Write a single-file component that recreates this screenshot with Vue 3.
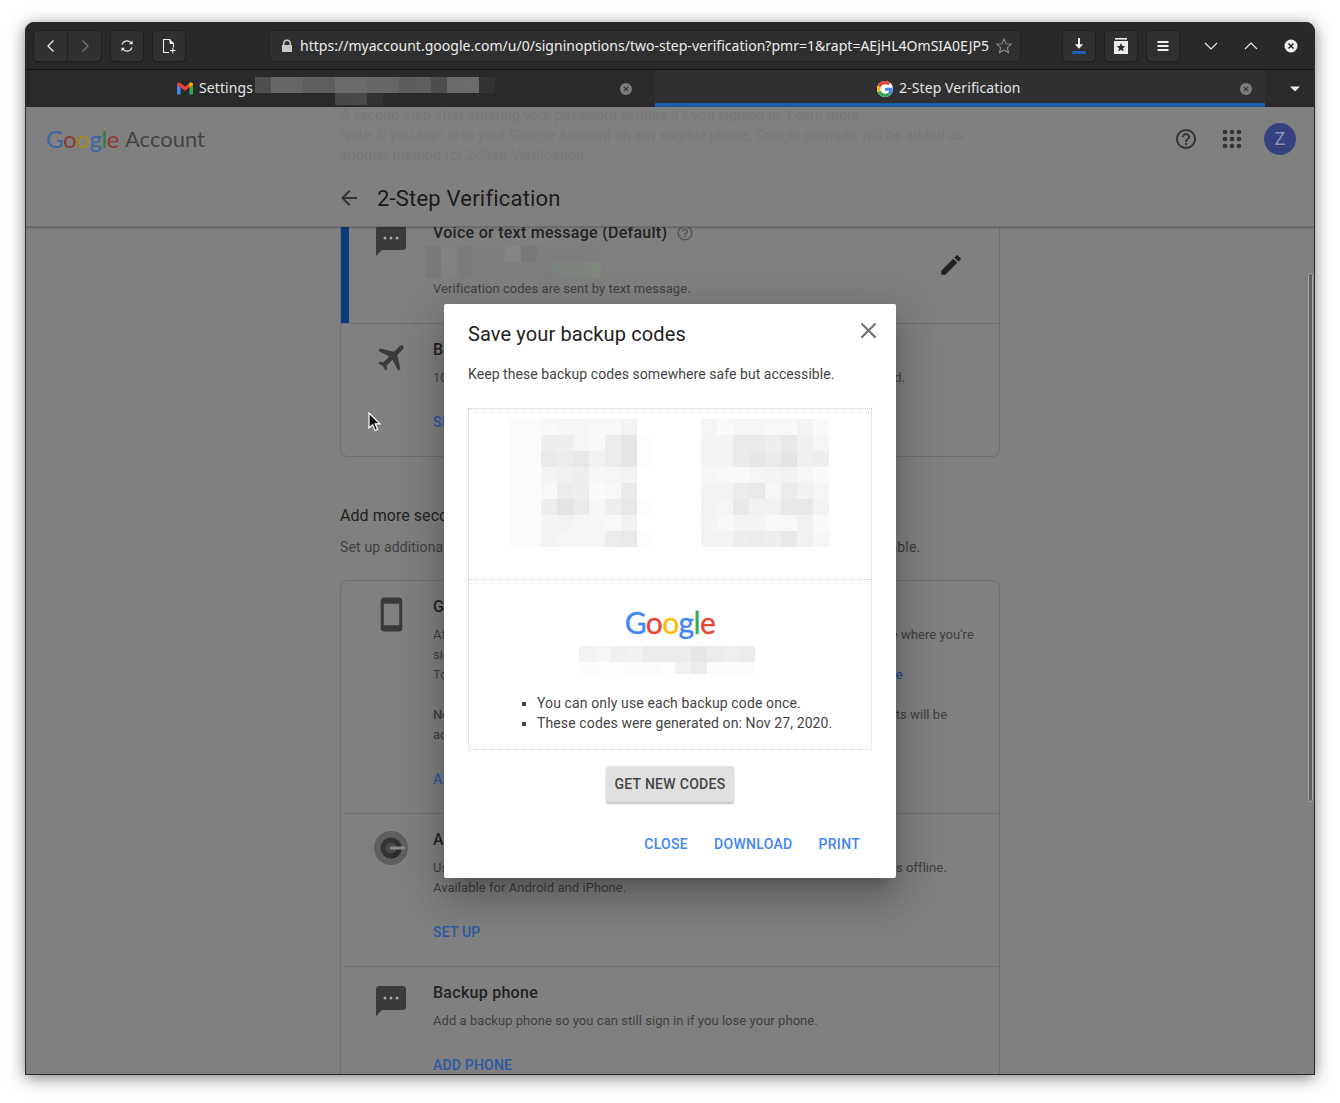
<template>
  <div class="screen">
    <div class="window">
      <div class="toolbar">
        <div class="btn-group">
          <button class="tb-btn half">
            <svg width="16" height="16" viewBox="0 0 16 16"><path d="M10.500 2.500 5 8l5.500 5.500" class="line" /></svg>
          </button>
          <button class="tb-btn half">
            <svg width="16" height="16" viewBox="0 0 16 16"><path d="M5.500 2.500 11 8l-5.500 5.500" class="line dim" /></svg>
          </button>
        </div>
        <button class="tb-btn">
          <svg width="16" height="16" viewBox="0 0 16 16">
            <path d="M3 6.500A5.300 5.300 0 0 1 12.600 5.500M13 9.500A5.300 5.300 0 0 1 3.400 10.500" class="line thin" />
            <path d="M13.600 2.600v3.600H10zM2.400 13.400V9.800H6z" fill="#e8e8e8" />
          </svg>
        </button>
        <button class="tb-btn">
          <svg width="16" height="16" viewBox="0 0 16 16">
            <path d="M8 14.500H2.500v-13h6l4 4v4" class="line thin" />
            <path d="M8 1.500h1v4h4" fill="#eee" stroke="#eee" />
            <path d="M9 12.500h5.500M11.800 9.800v5.400" class="line thin" />
          </svg>
        </button>
        <div class="url-bar">
          <svg width="12" height="14" viewBox="0 0 12 14"><path d="M2 6V4.500a4 4 0 0 1 8 0V6h1v7H1V6zm1.500 0h5V4.500a2.500 2.500 0 0 0-5 0z" fill="#c8c8c8" /></svg>
          <span class="url-text">https://myaccount.google.com/u/0/signinoptions/two-step-verification?pmr=1&amp;rapt=AEjHL4OmSIA0EJP5</span>
          <svg width="18" height="18" viewBox="0 0 18 18"><path d="m9 2 2.100 4.700 5.100.5-3.900 3.400 1.200 5L9 13l-4.500 2.600 1.200-5-3.900-3.400 5.100-.5z" fill="none" stroke="#8a8a8a" stroke-width="1.100" /></svg>
        </div>
        <button class="tb-btn download">
          <svg width="16" height="18" viewBox="0 0 16 18">
            <path d="M8 1v9" stroke="#f2f2f2" stroke-width="2" />
            <path d="M3.800 7.200h8.400L8 11.800z" fill="#f2f2f2" />
            <rect x="1" y="14" width="14" height="3" rx="1" fill="#1c62b9" />
          </svg>
        </button>
        <button class="tb-btn">
          <svg width="16" height="18" viewBox="0 0 16 18">
            <rect x="2" y="1" width="12" height="1.600" fill="#eee" />
            <path d="M1 4h14v13H1z" fill="#eee" />
            <path d="m8 6 1.300 2.900 3.100.3-2.400 2.100.8 3.100L8 12.800l-2.800 1.600.8-3.100-2.400-2.100 3.100-.3z" fill="#2e2e2e" />
          </svg>
        </button>
        <button class="tb-btn">
          <svg width="16" height="16" viewBox="0 0 16 16"><path d="M2.500 3h11v2h-11zM2.500 7h11v2h-11zM2.500 11h11v2h-11z" fill="#eee" /></svg>
        </button>
        <div class="win-controls">
          <svg width="16" height="16" viewBox="0 0 16 16"><path d="m2 5 6 6 6-6" class="line thin" /></svg>
          <svg width="16" height="16" viewBox="0 0 16 16"><path d="m2 11 6-6 6 6" class="line thin" /></svg>
          <svg width="16" height="16" viewBox="0 0 16 16">
            <circle cx="8" cy="8" r="6.500" fill="#eee" />
            <path d="m5.500 5.500 5 5m0-5-5 5" stroke="#2b2b2b" stroke-width="1.600" />
          </svg>
        </div>
      </div>

      <div class="tabbar">
        <div class="tab first">
          <svg class="tab-icon" width="16" height="13" viewBox="0 0 16 12">
            <path d="M0 2.400V11a1 1 0 0 0 1 1h2.600V5z" fill="#4285f4" />
            <path d="M16 2.400V11a1 1 0 0 1-1 1h-2.600V5z" fill="#34a853" />
            <path d="M0 2.400C0 .6 1.800-.5 3.300.5L8 4.200 12.700.5C14.200-.5 16 .6 16 2.400L12.400 5 8 8.300 3.600 5z" fill="#ea4335" />
            <path d="M12.400 1 12.700.5C14.200-.5 16 .6 16 2.400L12.400 5z" fill="#fbbc05" />
          </svg>
          <span class="tab-title">Settings</span>
          <div class="pixels tab-blur" :style="gridStyle(tabBlur, 16)">
            <i v-for="(c, i) in tabBlur.flat()" :key="i" :style="{ background: c }"></i>
          </div>
          <svg class="tab-close" width="12" height="12" viewBox="0 0 12 12">
            <circle cx="6" cy="6" r="6" fill="#7c7c7c" />
            <path d="m3.800 3.800 4.400 4.400m0-4.400L3.800 8.200" stroke="#2e2e2e" stroke-width="1.100" />
          </svg>
        </div>
        <div class="tab active">
          <svg class="tab-icon" width="16" height="16" viewBox="0 0 48 48">
            <circle cx="24" cy="24" r="24" fill="#fff" />
            <path fill="#ea4335" d="M24 9.500c3.500 0 6.700 1.200 9.200 3.600l6.900-6.900C35.900 2.400 30.500 0 24 0 14.600 0 6.500 5.400 2.600 13.200l8 6.200C12.500 13.700 17.800 9.500 24 9.500z" />
            <path fill="#4285f4" d="M46.900 24.500c0-1.600-.1-3.100-.4-4.500H24v9h12.900c-.6 3-2.200 5.500-4.700 7.200l7.700 6c4.500-4.200 7-10.300 7-17.700z" />
            <path fill="#fbbc05" d="M10.500 28.600c-.5-1.500-.8-3-.8-4.600s.3-3.200.8-4.600l-8-6.200C.9 16.500 0 20.100 0 24s.9 7.500 2.600 10.800z" />
            <path fill="#34a853" d="M24 48c6.500 0 11.900-2.100 15.900-5.800l-7.700-6c-2.200 1.400-4.900 2.300-8.200 2.300-6.200 0-11.500-4.200-13.400-9.900l-8 6.200C6.500 42.600 14.600 48 24 48z" />
          </svg>
          <span class="tab-title">2-Step Verification</span>
          <svg class="tab-close" width="12" height="12" viewBox="0 0 12 12">
            <circle cx="6" cy="6" r="6" fill="#7c7c7c" />
            <path d="m3.800 3.800 4.400 4.400m0-4.400L3.800 8.200" stroke="#303030" stroke-width="1.100" />
          </svg>
        </div>
        <div class="tab-menu">
          <svg width="12" height="8" viewBox="0 0 12 8"><path d="M1 1.500h10L6 6.500z" fill="#eee" /></svg>
        </div>
      </div>

      <div class="page">
        <header class="app-header">
          <div class="faded-copy">
            <p>A second step after entering your password verifies it's you signing in. Learn more</p>
            <p>Note: If you sign in to your Google Account on any eligible phone, Google prompts will be added as</p>
            <p>another method for 2-Step Verification.</p>
          </div>
          <div class="brand-row">
            <span class="brand"><b class="c1">G</b><b class="c2">o</b><b class="c3">o</b><b class="c1">g</b><b class="c4">l</b><b class="c2">e</b></span>
            <span class="brand-name">Account</span>
            <svg class="help" width="24" height="24" viewBox="0 0 24 24"><path :d="helpPath" fill="#333" /></svg>
            <svg class="apps" width="24" height="24" viewBox="0 0 24 24">
              <g fill="#333">
                <template v-for="y in [5, 12, 19]" :key="y">
                  <circle v-for="x in [5, 12, 19]" :key="x" :cx="x" :cy="y" r="2.300" />
                </template>
              </g>
            </svg>
            <span class="avatar">Z</span>
          </div>
          <div class="title-row">
            <svg width="24" height="24" viewBox="0 0 24 24"><path d="M20 11H7.830l5.590-5.590L12 4l-8 8 8 8 1.410-1.410L7.830 13H20v-2z" fill="#333" /></svg>
            <h1>2-Step Verification</h1>
          </div>
        </header>

        <div class="scroller">
          <section class="card first-card">
            <div class="row selected">
              <div class="row-icon">
                <svg width="36" height="36" viewBox="0 0 24 24"><path :d="bubblePath" fill="#3a3a3a" /><g fill="#a8a8a8"><circle cx="8" cy="10" r="1" /><circle cx="12" cy="10" r="1" /><circle cx="16" cy="10" r="1" /></g></svg>
              </div>
              <div class="row-body">
                <h3>Voice or text message (Default)
                  <svg class="mini-help" width="18" height="18" viewBox="0 0 24 24"><path :d="helpPath" fill="#555" /></svg>
                </h3>
                <div class="pixels voice-blur" :style="gridStyle(voiceBlur, 16)">
                  <i v-for="(c, i) in voiceBlur.flat()" :key="i" :style="{ background: c }"></i>
                </div>
                <p class="voice-note">Verification codes are sent by text message.</p>
              </div>
              <svg class="pencil" width="26" height="26" viewBox="0 0 24 24">
                <path d="M3 17.250V21h3.750L17.810 9.940l-3.750-3.750L3 17.250zM20.710 7.040c.39-.39.39-1.020 0-1.410l-2.340-2.340c-.39-.39-1.020-.39-1.410 0l-1.830 1.830 3.750 3.750 1.830-1.830z" fill="#222" />
              </svg>
            </div>
            <div class="divider flush"></div>
            <div class="row">
              <div class="row-icon">
                <svg class="plane" width="36" height="36" viewBox="0 0 24 24"><path d="M21 16v-2l-8-5V3.500c0-.83-.67-1.500-1.500-1.500S10 2.670 10 3.500V9l-8 5v2l8-2.500V19l-2 1.500V22l3.500-1 3.500 1v-1.500L13 19v-5.500l8 2.500z" fill="#3a3a3a" /></svg>
              </div>
              <div class="row-body">
                <h3>Backup codes</h3>
                <p class="gap">10 single-use codes are active at this time, but you can generate more as needed.</p>
                <a class="action">SHOW CODES</a>
              </div>
            </div>
          </section>

          <h2>Add more second steps to verify it's you</h2>
          <p class="section-sub">Set up additional backup steps so you can sign in even if your other options aren't available.</p>

          <section class="card">
            <div class="row">
              <div class="row-icon">
                <svg class="phone" width="37" height="37" viewBox="0 0 24 24"><path d="M17 1.010 7 1c-1.100 0-2 .9-2 2v18c0 1.100.9 2 2 2h10c1.100 0 2-.9 2-2V3c0-1.100-.9-1.990-2-1.990zM17 19H7V5h10v14z" fill="#3a3a3a" /></svg>
              </div>
              <div class="row-body">
                <h3>Google prompt</h3>
                <p class="gap">After you enter your password, Google prompts are securely sent to every phone where you're</p>
                <p>signed in. Just tap the notification to review and sign in.</p>
                <p>To get started, you need the phone signed in to your Google Account. <a class="inline">Learn more</a></p>
                <p class="note"><b>Note:</b> If you sign in to your Google Account on any eligible phone, Google prompts will be</p>
                <p>added as another method for 2-Step Verification.</p>
                <a class="action">ADD GOOGLE PROMPT</a>
              </div>
            </div>
            <div class="divider"></div>
            <div class="row">
              <div class="row-icon">
                <svg class="auth" width="34" height="34" viewBox="0 0 34 34">
                  <circle cx="17" cy="17" r="17" fill="#5f5f5f" />
                  <circle cx="17" cy="17" r="10.500" fill="#333" />
                  <path d="M17 17 27.500 17A10.500 10.500 0 0 1 17 27.500z" fill="#2a2a2a" />
                  <circle cx="17" cy="17" r="5.500" fill="#4a4a4a" />
                  <rect x="16" y="15.500" width="15" height="3" rx=".8" fill="#8a8a8a" />
                </svg>
              </div>
              <div class="row-body">
                <h3>Authenticator app</h3>
                <p class="gap">Use the Authenticator app to get free verification codes, even when your phone is offline.</p>
                <p>Available for Android and iPhone.</p>
                <a class="action">SET UP</a>
              </div>
            </div>
            <div class="divider"></div>
            <div class="row">
              <div class="row-icon">
                <svg width="36" height="36" viewBox="0 0 24 24"><path :d="bubblePath" fill="#3a3a3a" /><g fill="#a8a8a8"><circle cx="8" cy="10" r="1" /><circle cx="12" cy="10" r="1" /><circle cx="16" cy="10" r="1" /></g></svg>
              </div>
              <div class="row-body">
                <h3>Backup phone</h3>
                <p class="gap">Add a backup phone so you can still sign in if you lose your phone.</p>
                <a class="action">ADD PHONE</a>
              </div>
            </div>
          </section>
        </div>

        <div class="scrollbar"></div>

        <div class="modal">
          <h2 class="modal-title">Save your backup codes</h2>
          <svg class="modal-close" width="27" height="27" viewBox="0 0 24 24"><path d="M19 6.410 17.590 5 12 10.590 6.410 5 5 6.410 10.590 12 5 17.590 6.410 19 12 13.410 17.590 19 19 17.590 13.410 12z" fill="#757575" /></svg>
          <p class="modal-sub">Keep these backup codes somewhere safe but accessible.</p>
          <div class="codes-box">
            <div class="codes">
              <div class="pixels" :style="gridStyle(codesLeft, 16)">
                <i v-for="(c, i) in codesLeft.flat()" :key="i" :style="{ background: c }"></i>
              </div>
              <div class="pixels" :style="gridStyle(codesRight, 16)">
                <i v-for="(c, i) in codesRight.flat()" :key="i" :style="{ background: c }"></i>
              </div>
            </div>
            <div class="codes-foot">
              <div class="logo"><b class="m1">G</b><b class="m2">o</b><b class="m3">o</b><b class="m1">g</b><b class="m4">l</b><b class="m2">e</b></div>
              <div class="pixels account-blur" :style="gridStyle(accountBlur, 16)">
                <i v-for="(c, i) in accountBlur.flat()" :key="i" :style="{ background: c }"></i>
              </div>
              <ul>
                <li>You can only use each backup code once.</li>
                <li>These codes were generated on: Nov 27, 2020.</li>
              </ul>
            </div>
          </div>
          <button class="new-codes">GET NEW CODES</button>
          <div class="modal-actions">
            <a>CLOSE</a>
            <a>DOWNLOAD</a>
            <a>PRINT</a>
          </div>
        </div>

        <svg class="cursor" width="14" height="20" viewBox="0 0 14 20">
          <path d="M1 1v15l3.600-3.300 2.500 5.800 2.600-1.100-2.500-5.600H12z" fill="#111" stroke="#fff" stroke-width="1.200" />
        </svg>
      </div>
    </div>
  </div>
</template>

<script setup>
const helpPath = 'M11 18h2v-2h-2v2zm1-16C6.480 2 2 6.480 2 12s4.480 10 10 10 10-4.480 10-10S17.520 2 12 2zm0 18c-4.410 0-8-3.590-8-8s3.590-8 8-8 8 3.590 8 8-3.590 8-8 8zm0-14c-2.210 0-4 1.790-4 4h2c0-1.100.9-2 2-2s2 .9 2 2c0 2-3 1.750-3 5h2c0-2.250 3-2.500 3-5 0-2.210-1.790-4-4-4z';
const bubblePath = 'M20 2H4c-1.100 0-1.990.9-1.990 2L2 22l4-4h14c1.100 0 2-.9 2-2V4c0-1.100-.9-2-2-2z';

// short hex rows, turned into css colours
function toRows(text) {
    return text.trim().split('\n').map(line =>
        line.trim().split(/\s+/).map(v => (v === '--' ? 'transparent' : '#' + (v.length === 2 ? v + v + v : v)))
    );
}

function gridStyle(rows, size) {
    return {
        gridTemplateColumns: `repeat(${rows[0].length}, ${size}px)`,
    };
}

const tabBlur = toRows(`
    4f 66 66 5e 5e 6a 6a 66 66 5c 5e 4d 6a 6c 33
    -- -- -- -- -- 48 4a 33 -- -- -- -- -- -- --
`);

const voiceBlur = toRows(`
    7a 82 7c 7f 7f 84 79 7e 7e 7e 7e
    7a 82 7c 7f 7f 7f 7f 7e 7d847e 7d847e 80877e
`);

const codesLeft = toRows(`
    fb fb f8 f6 f6 f8 f8 f3 ff
    fb fb ee ee f5 f8 ec e6 fd
    fb fb e9 ec e8 f1 ec e6 fd
    fb fc f4 f1 ee f6 f5 f3 ff
    fb fc f8 ec ee fa f8 ea ff
    fb fb ee e4 ea f6 ee e8 fd
    fb fb f4 f3 f6 f6 f8 f1 ff
    fb fb f3 f6 f5 f5 ec e9 fd
`);

const codesRight = toRows(`
    f5 fa f6 f5 f8 f8 f3 f9
    f4 f4 ea ea ee e8 f0 f5
    f4 f3 ea e6 ea e4 f0 ee
    f6 f8 f9 f5 f4 f2 f6 fa
    f4 f3 ec e9 f6 ec f1 f5
    f3 f5 e8 f1 f1 e8 e8 f3
    f4 f8 f4 f4 f8 f8 f2 f9
    f3 f3 ee ec ee e8 f1 f6
`);

const accountBlur = toRows(`
    f3 f6 f0 f2 ec ec ec e6 ec ef ec
    fc fd fd fc fb fd f2 ec fc fb fb
`);
</script>

<style>
html, body {
    margin: 0;
    background: #fff;
}
</style>

<style scoped>
.screen {
    width: 1340px;
    height: 1103px;
    overflow: hidden;
    background: #fff;
    padding: 22px 0 0 25px;
    box-sizing: border-box;
    font-family: Roboto, "Liberation Sans", sans-serif;
}

.window {
    width: 1290px;
    height: 1053px;
    box-sizing: border-box;
    border: 1px solid #2a2a2a;
    border-top: none;
    border-radius: 9px 9px 0 0;
    background: #2b2b2b;
    box-shadow: 0 3px 16px rgba(0, 0, 0, 0.5);
    display: flex;
    flex-direction: column;
    overflow: hidden;
}

/* browser chrome */
.toolbar {
    height: 48px;
    flex: none;
    box-sizing: border-box;
    display: flex;
    align-items: center;
    padding: 0 0 0 7px;
    gap: 8px;
    background: #292929;
    border-bottom: 1px solid #141414;
}

.tb-btn {
    width: 34px;
    height: 32px;
    padding: 0;
    box-sizing: border-box;
    border: 1px solid #1f1f1f;
    border-radius: 5px;
    background: #303030;
    display: flex;
    align-items: center;
    justify-content: center;
    box-shadow: 0 1px 0 #222;
}

.btn-group {
    display: flex;
}

.tb-btn.half {
    width: 35px;
    border-radius: 5px 0 0 5px;
}

.tb-btn.half + .tb-btn.half {
    width: 34px;
    border-left: none;
    border-radius: 0 5px 5px 0;
}

.line {
    fill: none;
    stroke: #eee;
    stroke-width: 1.300;
}

.line.dim {
    stroke: #777;
}

.line.thin {
    stroke-width: 1.100;
}

.url-bar {
    width: 752px;
    height: 32px;
    margin-left: 75px;
    box-sizing: border-box;
    display: flex;
    align-items: center;
    padding-left: 11px;
    background: #2f2f2f;
    border: 1px solid #202020;
    border-radius: 5px;
}

.url-text {
    margin: 0 6px 0 7px;
    font: 14px "Noto Sans", sans-serif;
    color: #eee;
    white-space: nowrap;
    letter-spacing: 0.02px;
}

.download {
    margin-left: 33px;
}

.win-controls {
    display: flex;
    align-items: center;
    gap: 24px;
    margin-left: 15px;
}

.tabbar {
    height: 37px;
    flex: none;
    display: flex;
    background: #2a2a2a;
    box-sizing: border-box;
}

.tab {
    display: flex;
    align-items: center;
    position: relative;
    box-sizing: border-box;
}

.tab.first {
    width: 629px;
    padding-left: 151px;
}

.tab.active {
    width: 610px;
    padding-left: 222px;
    padding-top: 4px;
    background: #303030;
    border-bottom: 4px solid #1c5aa6;
}

.tab-menu {
    flex: 1;
    display: flex;
    align-items: center;
    justify-content: center;
    padding-left: 10px;
}

.tab-title {
    margin: 0 0 2px 6px;
    font: 14px "Noto Sans", sans-serif;
    letter-spacing: 0.1px;
    color: #e6e6e6;
}

.tab-blur {
    margin: 5px 0 0 2px;
    grid-template-rows: 16px 12px;
}

.tab-close {
    margin-left: auto;
    margin-right: 23px;
}

.tab.active .tab-close {
    margin-right: 13px;
}

.pixels {
    display: grid;
    grid-auto-rows: 16px;
}

/* dimmed page */
.page {
    flex: 1;
    position: relative;
    background: #808080;
    overflow: hidden;
}

.app-header {
    height: 120px;
    position: relative;
    box-sizing: border-box;
    border-bottom: 1px solid #6e6e6e;
    box-shadow: 0 1px 2px rgba(0, 0, 0, 0.25);
    z-index: 1;
    background: #808080;
}

.faded-copy {
    position: absolute;
    left: 314px;
    top: -2px;
    color: #797979;
    font-size: 14px;
    line-height: 20px;
    letter-spacing: 0.15px;
}

.faded-copy p {
    margin: 0;
    white-space: nowrap;
}

.brand-row {
    position: relative;
    height: 64px;
    padding-left: 20px;
    display: flex;
    align-items: center;
    box-sizing: border-box;
}

.brand {
    margin-bottom: 2px;
    font: 24px Lato, sans-serif;
    letter-spacing: -0.4px;
}

.brand b,
.logo b {
    font-weight: 400;
}

.c1 { color: #3a66a5; }
.c2 { color: #8d3a30; }
.c3 { color: #a5861f; }
.c4 { color: #2f7a40; }

.brand-name {
    margin: 0 0 2px 6px;
    font: 22px Lato, sans-serif;
    color: #444;
}

.help {
    margin-left: auto;
}

.apps {
    margin-left: 22px;
}

.avatar {
    width: 32px;
    height: 32px;
    margin: 0 18px 0 20px;
    border-radius: 50%;
    background: #35417f;
    color: #8b93b8;
    font-size: 18px;
    line-height: 32px;
    text-align: center;
}

.title-row {
    display: flex;
    align-items: center;
    padding-left: 311px;
    height: 30px;
    margin-top: 12px;
}

.title-row h1 {
    margin: 0 0 0 16px;
    font-size: 22px;
    font-weight: 400;
    letter-spacing: 0.2px;
    color: #1b1b1b;
}

.scroller {
    width: 660px;
    margin-left: 314px;
    font-size: 13px;
    color: #3f3f3f;
    letter-spacing: 0.05px;
}

.card {
    border: 1px solid #6f6f6f;
    border-radius: 8px;
}

.first-card {
    margin-top: -20px;
    border-top: none;
}

.row {
    display: flex;
    padding: 14px 0 24px;
    position: relative;
}

.row.selected {
    border-left: 8px solid #0d3a7a;
}

.row.selected .row-icon {
    width: 84px;
}

.row.selected .row-icon svg {
    margin-left: 24px;
}

.row-icon {
    width: 92px;
    flex: none;
}

.row-icon svg {
    display: block;
    margin: 2px 0 0 32px;
}

.row-icon .auth {
    margin: 3px 0 0 33px;
}

.row-icon .phone {
    margin: 1px 0 0 32px;
}

.row-icon .plane {
    transform: rotate(45deg);
    margin: 1px 0 0 34px;
}

.row-body {
    flex: 1;
}

.row-body h3 {
    display: flex;
    align-items: center;
    gap: 9px;
    margin: 0;
    font-size: 16px;
    line-height: 24px;
    font-weight: 500;
    color: #232323;
    letter-spacing: 0.27px;
}

.row-body p {
    margin: 0;
    line-height: 20px;
    white-space: nowrap;
}

.row-body p.gap {
    margin-top: 6px;
}

.row-body p.note {
    margin-top: 20px;
}

.row-body p.voice-note {
    margin-top: 1px;
}

.row-body p b {
    font-weight: 500;
}

.voice-blur {
    margin: 1px 0 0 -8px;
    width: 176px;
}

.action {
    display: block;
    margin-top: 24px;
    font-size: 14px;
    line-height: 20px;
    font-weight: 500;
    letter-spacing: 0.2px;
    color: #2d5aa5;
}

.inline {
    color: #17468c;
}

.pencil {
    position: absolute;
    right: 35px;
    top: 45px;
}

.divider {
    height: 1px;
    margin-left: 3px;
    background: #6f6f6f;
}

.divider.flush {
    margin-left: 0;
}

.scroller h2 {
    margin: 47px 0 0;
    font-size: 16px;
    line-height: 24px;
    font-weight: 400;
    color: #222;
}

.section-sub {
    margin: 9px 0 23px;
    font-size: 14px;
    line-height: 20px;
    letter-spacing: 0.15px;
    white-space: nowrap;
}

.scrollbar {
    position: absolute;
    right: 1px;
    top: 166px;
    width: 5px;
    height: 529px;
    box-sizing: border-box;
    border: 1px solid #a8a8a8;
    border-radius: 3px;
    background: #59605e;
}

/* backup codes dialog */
.modal {
    position: absolute;
    left: 418px;
    top: 197px;
    width: 452px;
    height: 574px;
    box-sizing: border-box;
    padding: 16px 24px 0;
    background: #fff;
    border-radius: 2px;
    z-index: 2;
    box-shadow: 0 11px 15px -7px rgba(0, 0, 0, 0.2), 0 24px 38px 3px rgba(0, 0, 0, 0.14), 0 9px 46px 8px rgba(0, 0, 0, 0.12);
}

.modal-title {
    margin: 0;
    font-size: 20px;
    line-height: 28px;
    font-weight: 400;
    letter-spacing: 0.12px;
    color: #222;
}

.modal-close {
    position: absolute;
    right: 14px;
    top: 13px;
}

.modal-sub {
    margin: 16px 0 24px;
    font-size: 14px;
    line-height: 20px;
    letter-spacing: 0.065px;
    color: #444;
}

.codes-box {
    border: 1px dotted #ccc;
}

.codes {
    height: 171px;
    box-sizing: border-box;
    padding: 10px 0 0 40px;
    display: flex;
    gap: 48px;
    align-items: flex-start;
    border-bottom: 1px dotted #ccc;
}

.codes-foot {
    height: 169px;
    box-sizing: border-box;
    padding-top: 24px;
}

.logo {
    font: 30px/36px Lato, sans-serif;
    letter-spacing: -0.6px;
    -webkit-text-stroke: 0.3px;
    text-align: center;
}

.m1 { color: #4285f4; }
.m2 { color: #ea4335; }
.m3 { color: #fbbc05; }
.m4 { color: #34a853; }

.account-blur {
    margin: 6px 0 0 110px;
    grid-template-rows: 16px 12px;
}

.codes-foot ul {
    margin: 19px 0 0;
    padding-left: 68px;
    list-style: square;
    font-size: 14px;
    line-height: 20px;
    letter-spacing: 0.12px;
    color: #444;
}

.new-codes {
    display: block;
    width: 128px;
    height: 36px;
    margin: 16px auto 0;
    padding: 0;
    border: none;
    border-radius: 3px;
    background: #e0e0e0;
    box-shadow: 0 2px 2px rgba(0, 0, 0, 0.24);
    font: 500 14px Roboto, sans-serif;
    letter-spacing: 0.3px;
    color: #444;
}

.modal-actions {
    display: flex;
    justify-content: flex-end;
    gap: 26px;
    margin: 24px 12px 0 0;
    font-size: 14px;
    line-height: 36px;
    font-weight: 500;
    letter-spacing: 0.3px;
    color: #4285f4;
}

.cursor {
    position: absolute;
    left: 342px;
    top: 305px;
    z-index: 3;
}
</style>
